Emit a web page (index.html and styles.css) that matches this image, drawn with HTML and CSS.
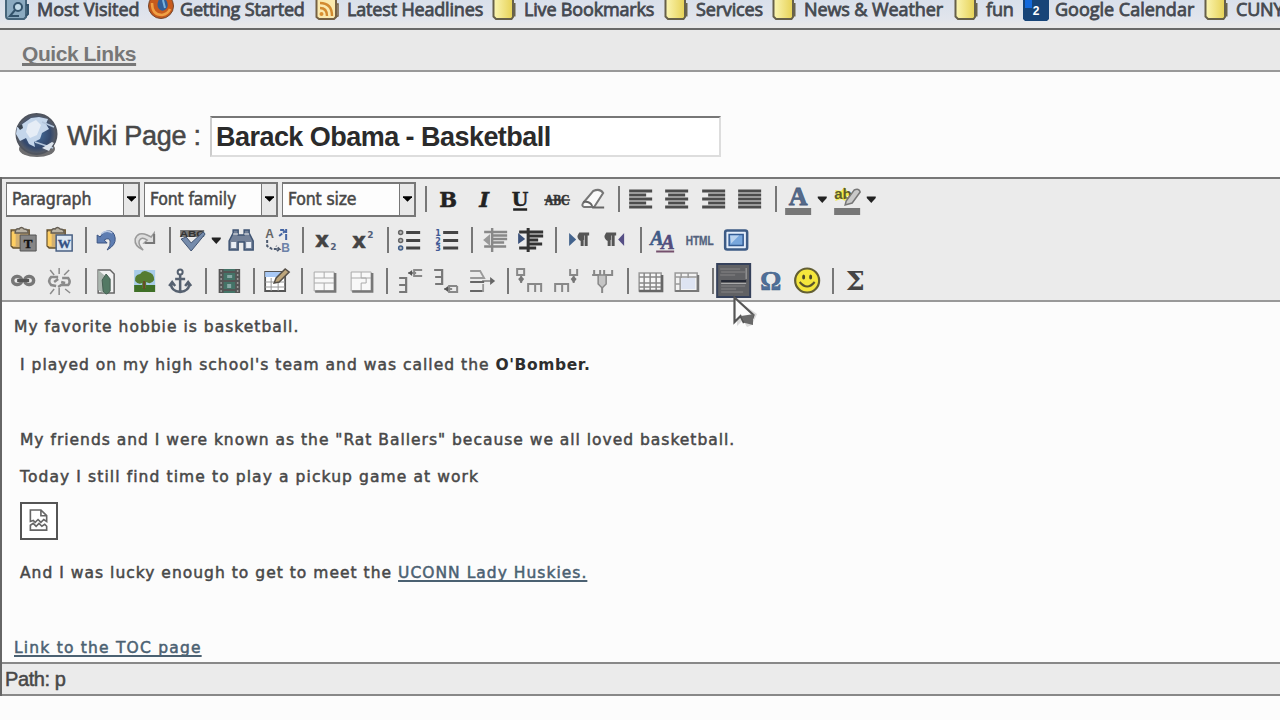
FILE: index.html
```html
<!DOCTYPE html>
<html lang="en">
<head>
<meta charset="utf-8">
<title>Wiki Page</title>
<link rel="stylesheet" href="styles.css">
</head>
<body>
<svg class="defs" width="0" height="0">
  <defs>
    <linearGradient id="fg"><stop offset="0" stop-color="#fbf6b4"/><stop offset="1" stop-color="#e6d154"/></linearGradient>
    <radialGradient id="globe"><stop offset="0" stop-color="#456f9f"/><stop offset=".7" stop-color="#34496d"/><stop offset="1" stop-color="#5d6169"/></radialGradient>
    <symbol id="folder" viewBox="0 0 26 22"><path d="M1.5 0V16.5L4 19H19.5L21 17V0" fill="url(#fg)" stroke="#66604a" stroke-width="2"/><path d="M21 4h1.5v11.5H20" fill="none" stroke="#69634c" stroke-width="2"/></symbol>
    <symbol id="clip" viewBox="0 0 36 36"><path d="M6 8h18v18H8l-2-2z" fill="#d3b070" stroke="#66512c" stroke-width="1.5"/><path d="M8.500 10v14" stroke="#ffcf62" stroke-width="4"/><path d="M10 11q0-5 4-4q2-3 5 0q4 0 4 4z" fill="#bbb4a5" stroke="#655e53" stroke-width="1.500"/></symbol>
  </defs>
</svg>

<nav class="bookmarks">
  <a class="bm b1"><svg viewBox="0 0 26 22"><path d="M1 0V16q0 3 3 3H19l2-2V0" fill="#8baac0" stroke="#46657b" stroke-width="2"/><circle cx="13" cy="7" r="4" fill="#c2dae7" stroke="#33536b" stroke-width="2"/><path d="M10 10l-5 6h9M21 5h2v9l-2 2" fill="none" stroke="#33536b" stroke-width="2"/></svg><span>Most Visited</span></a>
  <a class="bm b2"><svg viewBox="0 0 26 22"><circle cx="13" cy="6" r="12.5" fill="#c75a1d" stroke="#73472c"/><path d="M13 -4q9 5 6 12q-4 5-8 1q-3-3 0-10z" fill="#315e98"/><path d="M4 3q0 12 10 12q6-1 8-6" fill="none" stroke="#f0a044" stroke-width="2.5"/><path d="M15 0l2 8" stroke="#79b3dd" stroke-width="2"/></svg><span>Getting Started</span></a>
  <a class="bm b3"><svg viewBox="0 0 26 22"><path d="M1.5 0V17L4 19H19l2-2V0" fill="#fae9ae" stroke="#756144" stroke-width="2"/><circle cx="6.500" cy="14" r="2" fill="#d99032"/><path d="M5 8q7 0 7 8M5 3q12 0 12 13" fill="none" stroke="#d28a2f" stroke-width="2.400"/><path d="M21 4h2v12l-3 1" fill="none" stroke="#756144" stroke-width="1.500"/></svg><span>Latest Headlines</span></a>
  <a class="bm b4"><svg viewBox="0 0 26 22"><use href="#folder"/></svg><span>Live Bookmarks</span></a>
  <a class="bm b5"><svg viewBox="0 0 26 22"><use href="#folder"/></svg><span>Services</span></a>
  <a class="bm b6"><svg viewBox="0 0 26 22"><use href="#folder"/></svg><span>News &amp; Weather</span></a>
  <a class="bm b7"><svg viewBox="0 0 26 22"><use href="#folder"/></svg><span>fun</span></a>
  <a class="bm b8"><svg viewBox="0 0 26 22"><path d="M0 0H26V19l-2 2H2l-2-2z" fill="#174478"/><path d="M2 0H9V8H2z" fill="#1469db"/><text x="13" y="15" font-family="Liberation Sans" font-size="12" font-weight="bold" text-anchor="middle" fill="#fff">2</text></svg><span>Google Calendar</span></a>
  <a class="bm b9"><svg viewBox="0 0 26 22"><use href="#folder"/></svg><span>CUNY</span></a>
</nav>

<div class="quick"><a>Quick Links</a></div>

<header class="title">
  <svg class="globe" viewBox="0 0 46 48"><ellipse cx="23" cy="37" rx="18" ry="8" fill="#6e6e70"/><circle cx="22.500" cy="22" r="20" fill="url(#globe)" stroke="#50555f" stroke-width="2"/><path d="M7 13L17 6l8-1 9 2-2 5 3 5-7 4-2 6-6 3 1 5-6-3-3-6-6 3-4-7 1-7 4 1z" fill="#c4d6eb"/><path d="M14 12l8-4 5 5-4 10-7 3-4-6z" fill="#e6edf6"/><path d="M28 10l12 5M21 30l18 6" stroke="#b3c5db" stroke-width="1.500"/><path d="M28 36l10-6 2 1-5 8z" fill="#dce4ed"/><path d="M4 15l4-3 1 4-3 2z" fill="#39434f"/></svg>
  <label>Wiki Page :</label>
  <div class="field">Barack Obama - Basketball</div>
</header>

<main class="editor">
  <div class="toolbar">
    <div class="row">
      <div class="select"><span>Paragraph</span><i><svg viewBox="0 0 10 6"><path d="M0 0h10v1L5 6 0 1z"/></svg></i></div>
      <div class="select"><span>Font family</span><i><svg viewBox="0 0 10 6"><path d="M0 0h10v1L5 6 0 1z"/></svg></i></div>
      <div class="select last"><span>Font size</span><i><svg viewBox="0 0 10 6"><path d="M0 0h10v1L5 6 0 1z"/></svg></i></div>
      <b class="sep"></b>
      <svg class="ic" viewBox="0 0 36 36"><text class="fmt" x="18" y="25.500">B</text></svg>
      <svg class="ic" viewBox="0 0 36 36"><text class="fmt it" x="18" y="25.500">I</text></svg>
      <svg class="ic" viewBox="0 0 36 36"><text class="fmt un" x="18" y="24.500">U</text><path d="M11 28.500h14" stroke="#222" stroke-width="2.500"/></svg>
      <svg class="ic" viewBox="0 0 36 36"><text class="abc" x="18" y="23.500" textLength="25" lengthAdjust="spacingAndGlyphs">ABC</text><path d="M5 19h26" stroke="#333" stroke-width="1.500"/></svg>
      <svg class="ic" viewBox="0 0 36 36"><path d="M8 22L18 10q7-3 10 2L19 26H9q-3-1-1-4z" fill="#fafafa" stroke="#777" stroke-width="2"/><path d="M8 21q7-1 9 4M17 26.500h12" fill="none" stroke="#666" stroke-width="2"/></svg>
      <b class="sep"></b>
      <svg class="ic" viewBox="0 0 36 36"><path d="M6 10h23M6 14h17M6 18h23M6 22h17M6 26h23" stroke="#4c4c4c" stroke-width="3"/></svg>
      <svg class="ic" viewBox="0 0 36 36"><path d="M6 10h23M9 14h17M6 18h23M9 22h17M6 26h23" stroke="#4c4c4c" stroke-width="3"/></svg>
      <svg class="ic" viewBox="0 0 36 36"><path d="M6 10h23M12 14h17M6 18h23M12 22h17M6 26h23" stroke="#4c4c4c" stroke-width="3"/></svg>
      <svg class="ic" viewBox="0 0 36 36"><path d="M6 10h23M6 14h23M6 18h23M6 22h23M6 26h23" stroke="#4c4c4c" stroke-width="3"/></svg>
      <b class="sep"></b>
      <svg class="ic" viewBox="0 0 36 36"><text class="col" x="18" y="24">A</text><path d="M5 27h26v7H5z" fill="#777"/></svg>
      <svg class="arr" viewBox="0 0 12 36"><path d="M1.500 15.500h9V17L6 22 1.500 17z"/></svg>
      <svg class="ic" viewBox="0 0 36 36"><path d="M6 9l6 1 3-4 3 4 5 3-5 2-2 5-4-2-6 2 2-5z" fill="#efe94c"/><text class="ab" x="5" y="18">ab</text><path d="M17 20l8-11q5-2 6 2l-8 11-7 2z" fill="#c9c9c9" stroke="#777" stroke-width="1.500"/><path d="M5 27h26v7H5z" fill="#777"/></svg>
      <svg class="arr" viewBox="0 0 12 36"><path d="M1.500 15.500h9V17L6 22 1.500 17z"/></svg>
    </div>
    <div class="row">
      <svg class="ic" viewBox="0 0 36 36"><use href="#clip"/><path d="M15 13h16v16H15z" fill="#858585" stroke="#555"/><text class="pst" x="23" y="26">T</text></svg>
      <svg class="ic" viewBox="0 0 36 36"><use href="#clip"/><path d="M15 13h16v16H15z" fill="#dce6f2" stroke="#496083" stroke-width="1.500"/><text class="pst wd" x="23" y="26">W</text></svg>
      <b class="sep"></b>
      <svg class="ic" viewBox="0 0 36 36"><path d="M8 13v8h10l-3-3q5-3 6 1 1 4-3 9 9-5 8-12-1-8-8-7-4 0-7 6z" fill="#5e7db2" stroke="#3c5482"/><path d="M12 12q5-5 11-1" fill="none" stroke="#b7c7e2" stroke-width="1.500"/></svg>
      <svg class="ic" viewBox="0 0 36 36"><path d="M28 11v10H18l3-3q-6-4-8 1-1 4 4 9-9-4-8-11 3-8 12-4l4 2z" fill="#ddd" stroke="#9a9a9a" stroke-width="1.500"/><path d="M28 12v9H19" fill="none" stroke="#777" stroke-width="2"/></svg>
      <b class="sep"></b>
      <svg class="ic" viewBox="0 0 36 36"><path d="M6 8h24v7H6z" fill="#777"/><text class="spell" x="18" y="15" textLength="25" lengthAdjust="spacingAndGlyphs">ABC</text><path d="M7 17l5-2 5 6L29 10l2 2-14 17z" fill="#758bab" stroke="#435573"/></svg>
      <svg class="arr" viewBox="0 0 12 36"><path d="M1.500 15.500h9V17L6 22 1.500 17z"/></svg>
      <svg class="ic" viewBox="0 0 36 36"><path d="M6 28V19l4-8V8h5v5h6V8h5v3l4 8v9h-9v-8h-6v8z" fill="#738198" stroke="#3f5473" stroke-width="1.500"/><path d="M8 20h5v6H8zM23 20h5v6h-5z" fill="#e9eef5"/><path d="M10 12h5M21 12h5" stroke="#eee"/></svg>
      <svg class="ic" viewBox="0 0 36 36"><text class="rep" x="6" y="16">A</text><text class="rep bl" x="22" y="30">B</text><path d="M8 18v6l5 3h7l-3-3m3 3-3 3" fill="none" stroke="#4e5b70" stroke-width="2" stroke-dasharray="3 1.500"/><path d="M20 14l6-5m-5-1h6v6m0 0v4" fill="none" stroke="#4565a3" stroke-width="2" stroke-dasharray="4 1"/></svg>
      <b class="sep"></b>
      <svg class="ic" viewBox="0 0 36 36"><text class="sub" x="8" y="25">x</text><text class="sm" x="23" y="28">2</text></svg>
      <svg class="ic" viewBox="0 0 36 36"><text class="sub" x="9" y="26">x</text><text class="sm bl" x="24" y="16">2</text></svg>
      <b class="sep"></b>
      <svg class="ic" viewBox="0 0 36 36"><g fill="#bbb" stroke="#666" stroke-width="1.500"><circle cx="9.500" cy="10.500" r="2"/><circle cx="9.500" cy="18.500" r="2"/><circle cx="9.500" cy="26" r="2" stroke="#41608c"/></g><path d="M15 10.500h14M15 18.500h14M15 26h14" stroke="#444" stroke-width="2.800"/></svg>
      <svg class="ic" viewBox="0 0 36 36"><text class="num" x="7" y="13.500">1</text><text class="num" x="7" y="21.500">2</text><text class="num" x="7" y="29">3</text><path d="M15 10.500h15M15 18.500h15M15 26h15" stroke="#444" stroke-width="2.800"/></svg>
      <b class="sep"></b>
      <svg class="ic" viewBox="0 0 36 36"><path d="M8 10h23M17 13.500h14M17 17h14M17 20.500h11M8 24.500h22M16 6v24" stroke="#888" stroke-width="2.400"/><path d="M7 18l7-6v12z" fill="#999"/></svg>
      <svg class="ic" viewBox="0 0 36 36"><path d="M7 10h24M17 14h14M17 18h9M17 22h13M7 26h17M16 6v24" stroke="#333" stroke-width="3"/><path d="M13 17l-7-6v11z" fill="#3c527a"/></svg>
      <b class="sep"></b>
      <svg class="ic" viewBox="0 0 36 36"><path d="M9 11v13l7-6.500z" fill="#43638d"/><path d="M29 12h-9q-3 4 2 6v6M26 12v12" fill="none" stroke="#555" stroke-width="3"/><path d="M19 12h5v6q-5 0-5-6z" fill="#555"/></svg>
      <svg class="ic" viewBox="0 0 36 36"><path d="M28 11v13l-6-6.500z" fill="#554e85"/><path d="M20 12h-9q-3 4 2 6v6M17 12v12" fill="none" stroke="#555" stroke-width="3"/><path d="M10 12h5v6q-5 0-5-6z" fill="#555"/></svg>
      <b class="sep"></b>
      <svg class="ic" viewBox="0 0 36 36"><text class="sty" x="5" y="23">A</text><text class="sty two" x="16" y="27">A</text><path d="M11 29.500h18" stroke="#75506d" stroke-width="2"/></svg>
      <svg class="ic" viewBox="0 0 36 36"><text class="html" x="18.500" y="22.500" textLength="28" lengthAdjust="spacingAndGlyphs">HTML</text></svg>
      <svg class="ic" viewBox="0 0 36 36"><rect x="8" y="8.500" width="22" height="19" rx="2" fill="#e3edfa" stroke="#3d5b85" stroke-width="2.500"/><rect x="12" y="12.500" width="14" height="11" fill="#77a6dc" stroke="#335b93" stroke-width="1.500"/><path d="M13 13.500h9l-8 8z" fill="#b9d2ee"/></svg>
    </div>
    <div class="row">
      <svg class="ic" viewBox="0 0 36 36"><g fill="none" stroke="#777" stroke-width="3.400"><rect x="7.500" y="13.500" width="9" height="8" rx="4"/><rect x="19.500" y="13.500" width="9" height="8" rx="4"/></g><path d="M12 17.500h12" stroke="#555" stroke-width="3"/></svg>
      <svg class="ic" viewBox="0 0 36 36"><g fill="none" stroke="#8b8b8b" stroke-width="2.500"><path d="M17 14H10q-4 4 0 8l5 1M21 15h6q3 4 0 7h-7l-3 2M13 19l4-3M20 19l4 1"/><path d="M18 5v6M9 7l4 5M28 7l-5 5M18 25v7M13 26l-4 5M24 26l5 4" stroke-width="1.500"/></g></svg>
      <b class="sep"></b>
      <svg class="ic" viewBox="0 0 36 36"><path d="M9 7h12l4 4v19H9z" fill="#f2f2f2" stroke="#666" stroke-width="1.500"/><path d="M9 7l7 6v18l-7-4z" fill="#aab5ae"/><path d="M13 17l4-6 4 5v12q-4 6-7 0z" fill="#537964" stroke="#465f53"/></svg>
      <svg class="ic" viewBox="0 0 36 36"><path d="M8 7h21v17H8z" fill="#a8cce9"/><path d="M8 22h21v7H8z" fill="#3f7027"/><path d="M9 18q-1-6 5-7 3-5 8-2 6 1 6 8-3 5-8 2v6h-4v-5q-4 2-7-2z" fill="#557c31"/><path d="M18 18v8" stroke="#694a28" stroke-width="2"/></svg>
      <svg class="ic" viewBox="0 0 36 36"><path d="M18 12v17M13 16h10M9 21q0 7 9 8 9-1 9-8M7 23l3-4 3 4M23 23l3-4 3 4" fill="none" stroke="#566170" stroke-width="2.500"/><circle cx="18" cy="9" r="2.500" fill="#f7f7f7" stroke="#566170" stroke-width="2"/></svg>
      <b class="sep"></b>
      <svg class="ic" viewBox="0 0 36 36"><path d="M10 6h18v24H10z" fill="#447367"/><path d="M11 6v24M27.500 6v24" stroke="#555" stroke-width="5"/><path d="M11 7v22M27.500 7v22" stroke="#999" stroke-width="1.500" stroke-dasharray="2"/><path d="M13 18h12M13 9h12M13 27h12" stroke="#555" stroke-width="2"/><path d="M17 12h5v3h-5zM17 21h4v4h-4z" fill="#89a9a6"/></svg>
      <b class="sep"></b>
      <svg class="ic" viewBox="0 0 36 36"><path d="M7 9h20v19H7z" fill="#fff" stroke="#555" stroke-width="1.800"/><path d="M7 9h20v5H7z" fill="#a9c9f5"/><path d="M7 19h20M7 24h20M13 15v13M20 15v13" stroke="#999"/><path d="M16 20l2-5L27 6l4 3-10 10z" fill="#bda57b" stroke="#554f47" stroke-width="1.500"/></svg>
      <b class="sep"></b>
      <svg class="ic" viewBox="0 0 36 36"><g fill="#f8f8f8" stroke="#aaa"><path d="M8 9h20v19H8zM8 15h20M8 20h20M18 9v6M18 20v8"/></g><path d="M9 28.500h20V10" fill="none" stroke="#777" stroke-width="2.500"/></svg>
      <svg class="ic" viewBox="0 0 36 36"><g fill="#f8f8f8" stroke="#aaa"><path d="M8 9h20v19H8zM8 15h20M18 15h5v5h-5M18 9v6M18 20v8"/></g><path d="M9 28.500h20V10" fill="none" stroke="#777" stroke-width="2.500"/></svg>
      <b class="sep"></b>
      <svg class="ic" viewBox="0 0 36 36"><path d="M8 15h7v14H8M8 22h7" fill="none" stroke="#777" stroke-width="2.200"/><path d="M17 10h8M31 7h-8v6h8" fill="none" stroke="#888" stroke-width="2"/><path d="M17 10l4-3v6z" fill="#555"/></svg>
      <svg class="ic" viewBox="0 0 36 36"><path d="M7 7h8v14H8M8 14h7" fill="none" stroke="#777" stroke-width="2.200"/><path d="M17 26h8M30 23h-8v6h8v-6" fill="none" stroke="#888" stroke-width="2"/><path d="M17 26l4-3v6z" fill="#555"/></svg>
      <svg class="ic" viewBox="0 0 36 36"><path d="M7 8h10l4 7H7M7 28h13v-7M19 18h10" fill="none" stroke="#999" stroke-width="1.800"/><path d="M7 28h12M7 19h14" stroke="#666" stroke-width="2"/><path d="M27 14l5 4-5 4z" fill="#666"/></svg>
      <b class="sep"></b>
      <svg class="ic" viewBox="0 0 36 36"><path d="M6 6v6h7V6zM10 12v8M17 29v-8h13v8M24 21v8" fill="none" stroke="#888" stroke-width="2"/><path d="M7 16l3-3 3 3-3 4z" fill="#777"/></svg>
      <svg class="ic" viewBox="0 0 36 36"><path d="M22 6v6h7V6M25.500 12v8M7 29v-8h13v8M14 21v8" fill="none" stroke="#888" stroke-width="2"/><path d="M22.500 16l3-3 3 3-3 4z" fill="#777"/></svg>
      <svg class="ic" viewBox="0 0 36 36"><path d="M8 12h8V7M20 7v5h8V7M10 7v5M18 22v8" fill="none" stroke="#888" stroke-width="2"/><path d="M14 12h8v9l-4 4-4-4z" fill="#c4c4c4" stroke="#888" stroke-width="1.500"/></svg>
      <b class="sep"></b>
      <svg class="ic" viewBox="0 0 36 36"><path d="M7 10h22v18H7z" fill="#f7f7f7" stroke="#999" stroke-width="1.500"/><path d="M12 10v18M18 10v18M24 10v18M7 14h22M7 20h22M7 24h22" stroke="#888" stroke-width="1.500"/><path d="M7 28h23V12" fill="none" stroke="#666" stroke-width="2.400"/></svg>
      <svg class="ic" viewBox="0 0 36 36"><path d="M7 10h22v18H7z" fill="#f3f3f3" stroke="#999" stroke-width="1.500"/><path d="M13 10v5M20 10v5M7 14h22M12 14v14M7 21h5" stroke="#999" stroke-width="1.500"/><path d="M13 15h14v11H13z" fill="#dee4f2"/><path d="M7 28h23V12" fill="none" stroke="#777" stroke-width="2.200"/></svg>
      <b class="sep"></b>
      <svg class="ic hr" viewBox="0 0 36 36"><rect x="1" y="1" width="33" height="33" fill="#606164" stroke="#35415b" stroke-width="2"/><path d="M4 6h20M5 9h24M4 12h15M5 23h24M5 26h15M5 29h22" stroke="#858585"/><path d="M5 18h25" stroke="#272b36" stroke-width="2"/><path d="M5 20.500h25M30 5v11" stroke="#aaa"/></svg>
      <svg class="ic" viewBox="0 0 36 36"><text class="omega" x="17.500" y="27" textLength="21" lengthAdjust="spacingAndGlyphs">Ω</text></svg>
      <svg class="ic" viewBox="0 0 36 36"><circle cx="18" cy="17.500" r="12" fill="#f4e63c" stroke="#635f34" stroke-width="2.200"/><ellipse cx="14.500" cy="14" rx="1.500" ry="2.500" fill="#4a4728"/><ellipse cx="21.500" cy="14" rx="1.500" ry="2.500" fill="#4a4728"/><path d="M10.500 19q7.500 9 15 0" fill="none" stroke="#5a542b" stroke-width="2"/></svg>
      <b class="sep"></b>
      <svg class="ic" viewBox="0 0 36 36"><text class="sigma" x="18" y="26.500" textLength="19" lengthAdjust="spacingAndGlyphs">Σ</text></svg>
    </div>
    <svg class="cursor" viewBox="0 0 26 34"><path d="M4 4v26l6-6 4 7 5-2 5-11z" fill="#bbb" opacity=".5"/><path d="M1.500 1.500v24.500l6-6 3 6 9-4 1-3z" fill="#fafafa" stroke="#555" stroke-width="2.200"/><path d="M8 20l13-2-1 5v6l-8-2z" fill="#696969"/></svg>
  </div>

  <article class="content">
    <p class="p1">My favorite hobbie is basketball.</p>
    <p class="in p2">I played on my high school's team and was called the <strong>O'Bomber.</strong></p>
    <p>&nbsp;</p>
    <p class="in p3">My friends and I were known as the "Rat Ballers" because we all loved basketball.</p>
    <p class="in p4">Today I still find time to play a pickup game at work</p>
    <div class="broken"><svg viewBox="0 0 20 24"><path d="M1 13V1h11l6 6v6l-3-2-3 3-3-3-3 3-2-2zM12 1v6h6M1 22v-5l3-2 3 3 3-3 3 3 3-2 2 2v4z" fill="#fff" stroke="#666" stroke-width="1.700"/></svg></div>
    <p class="in p5">And I was lucky enough to get to meet the <a>UCONN Lady Huskies.</a></p>
    <p>&nbsp;</p>
    <p class="p6"><a>Link to the TOC page</a></p>
  </article>
  <footer class="path">Path: p</footer>
</main>
</body>
</html>
```
FILE: styles.css
```css
* { box-sizing: border-box; }
body { margin: 0; width: 1280px; height: 720px; overflow: hidden; background: #fcfcfc; font-family: "Liberation Sans", Arial, sans-serif; color: #444; }
.defs { display: block; height: 0; }
svg { overflow: visible; display: block; flex: none; }

.bookmarks { display: flex; height: 30px; padding-left: 5px; overflow: hidden; background: linear-gradient(#d9e0eb, #e2e5ec 70%, #e8e8e9 90%); border-bottom: 2px solid #696969; }
.bm { display: flex; flex: none; width: 172px; font: 18px/24px "Open Sans", "Noto Sans", sans-serif; color: #454950; -webkit-text-stroke: .8px #454950; white-space: nowrap; letter-spacing: -.17px; }
.bm svg { width: 26px; height: 22px; margin-right: 6px; -webkit-text-stroke: 0; }
.bm span { margin-top: -3px; }
.b1 { width: 143px; letter-spacing: 0; } .b2 { width: 167px; } .b3 { width: 177px; } .b4 { width: 172px; }
.b5 { width: 108px; } .b6 { width: 182px; letter-spacing: -.1px; } .b7 { width: 69px; } .b8 { width: 181px; letter-spacing: 0; }

.quick { height: 42px; padding: 12px 22px 0; background: #e9e9e9; border-bottom: 2px solid #999; font: bold 21px/24px "Liberation Sans", Arial, sans-serif; letter-spacing: -.45px; color: #777; }
.quick a { text-decoration: underline; text-decoration-thickness: 2.5px; text-underline-offset: 2px; text-decoration-skip-ink: none; }

.title { display: flex; height: 105px; padding: 37px 0 14px 14px; align-items: center; }
.globe { width: 46px; height: 48px; }
.title label { width: 150px; padding: 1px 0 0 7px; font-size: 27px; letter-spacing: -.25px; color: #484848; -webkit-text-stroke: .5px #484848; white-space: nowrap; }
.field { width: 511px; height: 41px; padding-left: 4px; background: #fff; border: 2px solid #ddd; border-top-color: #777; border-left-color: #ccc; font: bold 27px/38px "Liberation Sans", Arial, sans-serif; letter-spacing: -.54px; color: #2b2b2b; white-space: nowrap; }

.editor { height: 519px; border-left: 2px solid #666; }
.toolbar { position: relative; height: 125px; background: #ebebeb; border-top: 2px solid #777; border-bottom: 2px solid #999; padding-left: 3px; }
.row { display: flex; align-items: center; height: 41px; }
.row:first-child { padding-left: 1px; height: 40px; }
.select { display: flex; flex: none; width: 134px; height: 35px; margin-right: 4px; background: #fdfdfd; border: 2px solid #777; border-left-width: 1px; font: 17.5px/30px "DejaVu Sans Condensed", "DejaVu Sans", sans-serif; color: #484848; -webkit-text-stroke: .5px #484848; }
.select.last { margin-right: 2px; }
.select span { flex: 1; padding-left: 5px; white-space: nowrap; letter-spacing: -.15px; }
.select i { display: flex; width: 15px; border-left: 1px solid #777; background: #e8e8e8; align-items: center; justify-content: center; }
.select i svg { width: 9px; height: 6px; }
.sep { flex: none; width: 11.8px; height: 26px; background: linear-gradient(#777, #777) 7px 0 / 2px 26px no-repeat; }
.ic { width: 36.3px; height: 36px; }
.arr { width: 12.5px; height: 36px; fill: #222; }
.cursor { position: absolute; left: 731px; top: 117px; width: 26px; height: 34px; z-index: 2; }

.fmt { font: bold 21px "DejaVu Serif", serif; text-anchor: middle; fill: #222; stroke: #222; stroke-width: .5px; }
.it { font-style: italic; }
.un { font-size: 19px; }
.abc { font: bold 14px "Liberation Serif", serif; text-anchor: middle; fill: #333; stroke: #333; stroke-width: .5px; }
.col { font: bold 26px "Liberation Serif", serif; text-anchor: middle; fill: #566b8c; stroke: #4b5e7c; stroke-width: .8px; }
.ab { font: bold 15px "Liberation Sans", sans-serif; fill: #5d5b2b; }
.pst { font: bold 13px "Liberation Serif", serif; text-anchor: middle; fill: #111; stroke: #111; stroke-width: .4px; }
.wd { fill: #355183; stroke: #355183; }
.spell { font: bold 9px "Liberation Sans", sans-serif; text-anchor: middle; fill: #333; }
.rep { font: bold 12px "Liberation Sans", sans-serif; fill: #666; }
.bl { fill: #6c82a8; }
.sub { font: bold 21px "DejaVu Sans", sans-serif; fill: #444; stroke: #444; stroke-width: .6px; }
.sm { font: bold 9px "DejaVu Sans", sans-serif; fill: #526078; }
.num { font: bold 8px "DejaVu Sans", sans-serif; fill: #415a95; }
.sty { font: italic bold 20px "Liberation Serif", serif; fill: #405a86; stroke: #405a86; stroke-width: .6px; }
.two { fill: #544d7d; stroke: #544d7d; }
.html { font: bold 12px "Liberation Sans", sans-serif; text-anchor: middle; fill: #53627d; stroke: #53627d; stroke-width: .3px; }
.omega { font: bold 27px "Liberation Serif", serif; text-anchor: middle; fill: #4f6f98; stroke: #3f5f88; stroke-width: .6px; }
.sigma { font: bold 26px "DejaVu Serif", serif; text-anchor: middle; fill: #444; }

.content { height: 360px; padding: 14px 12px 0; font: 15.5px/22px "DejaVu Sans", Verdana, sans-serif; letter-spacing: 1.02px; color: #484848; -webkit-text-stroke: .5px; overflow: hidden; }
.content p { margin: 0 0 15.6px; height: 22px; white-space: pre; }
.content .in { padding-left: 6px; }
.content .p3 { letter-spacing: .99px; }
.content .p4 { letter-spacing: 1.1px; }
.content .p6 { letter-spacing: 1.2px; }
.content strong { color: #2e2e2e; letter-spacing: .6px; -webkit-text-stroke: 0; }
.content a { color: #4b6172; text-decoration: underline; text-decoration-thickness: 2px; text-underline-offset: 2px; text-decoration-skip-ink: none; }
.broken { display: flex; width: 38px; height: 38px; margin: -2px 0 22px 6px; border: 2px solid #555; align-items: center; justify-content: center; background: #fff; }
.broken svg { width: 20px; height: 23px; }
.path { height: 34px; padding-left: 3px; background: #ebebeb; border-top: 2px solid #888; border-bottom: 2px solid #888; font-size: 20px; line-height: 31px; letter-spacing: -.4px; color: #484848; -webkit-text-stroke: .5px; }
```
